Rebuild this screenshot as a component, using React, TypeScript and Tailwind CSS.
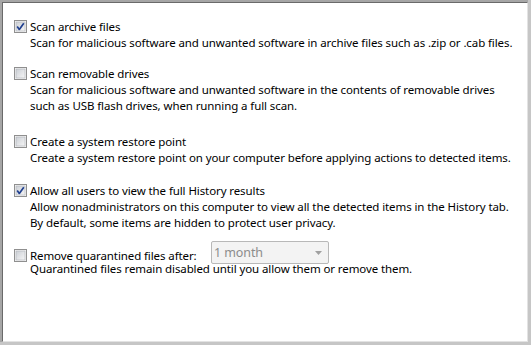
import React from "react";

const CheckBox = ({ checked }: { checked: boolean }) => (
  <svg width="13" height="13" viewBox="0 0 13 13" className="shrink-0">
    <defs>
      <linearGradient id="cbFill" x1="0" y1="0" x2="1" y2="1">
        <stop offset="0" stopColor="#cbcfd5" />
        <stop offset="1" stopColor="#f6f6f6" />
      </linearGradient>
    </defs>
    <rect x="0.5" y="0.5" width="12" height="12" fill="#f4f4f4" stroke="#8f8f8f" />
    <rect x="2" y="2" width="9" height="9" fill="url(#cbFill)" stroke="#aeb3b9" strokeWidth="0.6" />
    {checked && (
      <path d="M3.2 6.6 L5.3 9.4 L9.8 3.2" fill="none" stroke="#1f3f8f" strokeWidth="1.7" strokeLinejoin="round" />
    )}
  </svg>
);

interface OptionProps {
  checked: boolean;
  title: string;
  lines: string[];
  className?: string;
}

const Option = ({ checked, title, lines, className = "" }: OptionProps) => (
  <div className={className}>
    <div className="flex items-center gap-[3px] h-[17px]">
      <CheckBox checked={checked} />
      <span>{title}</span>
    </div>
    <div className="pl-[16px]">
      {lines.map((l, i) => (
        <div key={i} className="whitespace-nowrap">
          {l}
        </div>
      ))}
    </div>
  </div>
);

export default function App() {
  return (
    <div className="w-[531px] h-[345px] bg-[#c6c6c6] pr-[3px] pb-[3px]">
      <div className="w-full h-full border-t-2 border-l-2 border-[#a6a6a6]">
        <div className="w-full h-full border-t border-l border-[#6a6a6a] border-r border-b border-r-[#e3e3e3] border-b-[#e3e3e3] bg-white">
          <div
            className="pl-[11px] pt-[15px] text-[11.5px] leading-[16px] tracking-[-0.1px] text-black"
            style={{ fontFamily: '"Noto Sans", "Liberation Sans", sans-serif' }}
          >
            <Option
              checked
              title="Scan archive files"
              lines={["Scan for malicious software and unwanted software in archive files such as .zip or .cab files."]}
            />
            <Option
              className="mt-[14px]"
              checked={false}
              title="Scan removable drives"
              lines={[
                "Scan for malicious software and unwanted software in the contents of removable drives",
                "such as USB flash drives, when running a full scan.",
              ]}
            />
            <Option
              className="mt-[19px]"
              checked={false}
              title="Create a system restore point"
              lines={["Create a system restore point on your computer before applying actions to detected items."]}
            />
            <Option
              className="mt-[16px]"
              checked
              title="Allow all users to view the full History results"
              lines={[
                "Allow nonadministrators on this computer to view all the detected items in the History tab.",
                "By default, some items are hidden to protect user privacy.",
              ]}
            />
            <div className="mt-[10px]">
              <div className="flex items-end">
                <div className="flex items-center gap-[3px] h-[17px]">
                  <CheckBox checked={false} />
                  <span className="w-[181px]">Remove quarantined files after:</span>
                </div>
                <div className="w-[118px] h-[23px] rounded-[2px] border border-[#b8b8b8] bg-[#f3f3f3] flex items-center justify-between pl-[2px] pr-[6px] text-[#8c8c8c] text-[12.5px]">
                  <span>1 month</span>
                  <svg width="7" height="4" viewBox="0 0 7 4">
                    <path d="M0 0 H7 L3.5 4 Z" fill="#a0a0a0" />
                  </svg>
                </div>
              </div>
              <div className="pl-[16px] -mt-[3px] whitespace-nowrap">
                Quarantined files remain disabled until you allow them or remove them.
              </div>
            </div>
          </div>
        </div>
      </div>
    </div>
  );
}
